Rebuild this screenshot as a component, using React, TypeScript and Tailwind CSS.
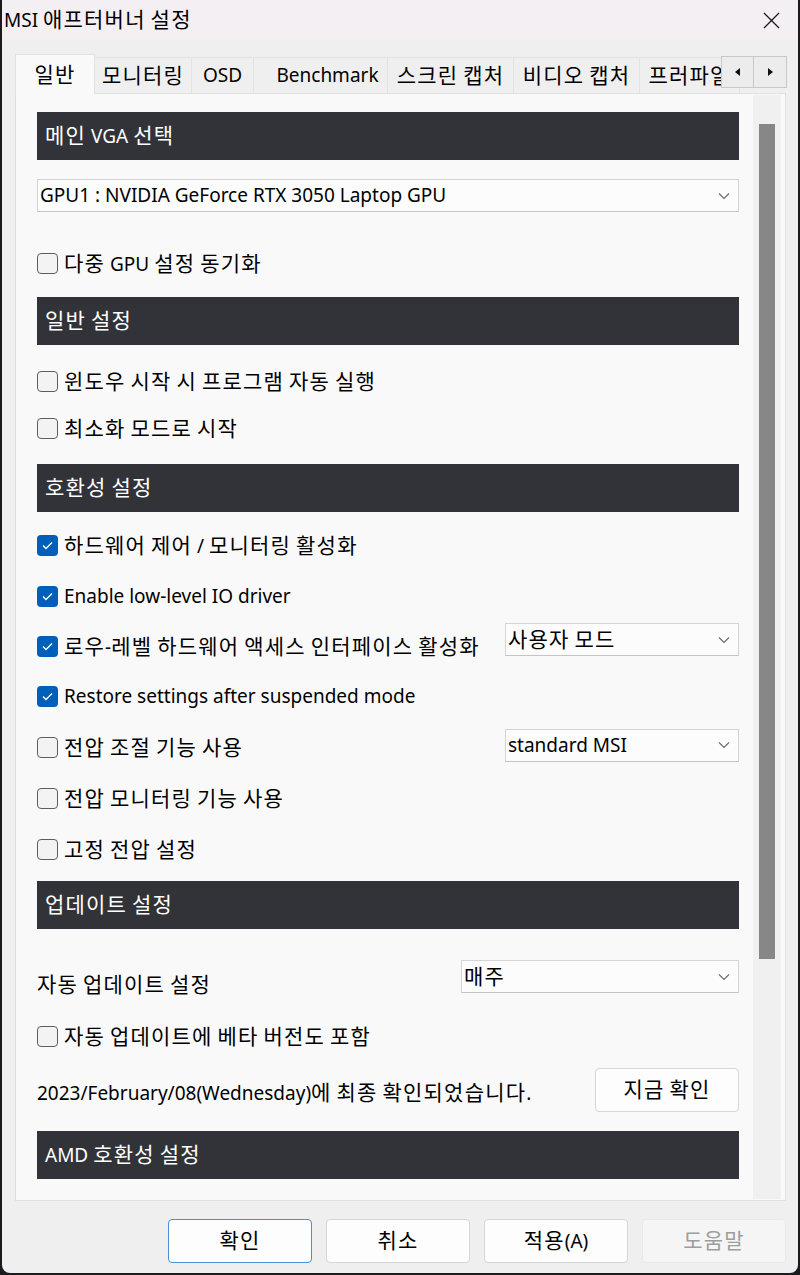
import React from "react";

const font = { fontFamily: '"Noto Sans", "Noto Sans CJK KR", sans-serif' };

// hangul runs get a slightly larger, looser face so they match the original's Malgun widths
const K = ({ t }: { t: string }) => (
  <span>
    {t.split(/([\uAC00-\uD7A3]+)/).map((s, i) =>
      /[\uAC00-\uD7A3]/.test(s) ? (
        <span key={i} className="text-[21px] tracking-[1.2px]">
          {s}
        </span>
      ) : (
        s
      )
    )}
  </span>
);

const tabs = [
  { label: "일반", w: "w-[80px]" },
  { label: "모니터링", w: "w-[97px]" },
  { label: "OSD", w: "w-[62px]" },
  { label: "Benchmark", w: "w-[134px] pl-[14px]" },
  { label: "스크린 캡처", w: "w-[126px]" },
  { label: "비디오 캡처", w: "w-[126px]" },
  { label: "프러파일", w: "w-[100px]" },
];

const Chevron = () => (
  <svg width="12" height="8" viewBox="0 0 12 8" className="shrink-0">
    <polyline points="1,1.5 6,6.5 11,1.5" fill="none" stroke="#6b6b6b" strokeWidth="1.2" />
  </svg>
);

const Select = ({ value, className }: { value: string; className: string }) => (
  <div
    className={`flex h-[33px] items-center justify-between border border-[#d4d4d4] border-b-[#c4c4c4] bg-[#fcfcfc] pl-[2px] pr-[8px] text-[19px] text-black ${className}`}
  >
    <span className="leading-none">
      <K t={value} />
    </span>
    <Chevron />
  </div>
);

const Check = ({ checked, label }: { checked?: boolean; label: string }) => (
  <div className="flex items-center gap-[6px]">
    {checked ? (
      <div className="flex h-[21px] w-[21px] items-center justify-center rounded-[4px] bg-[#005fb8]">
        <svg width="11" height="9" viewBox="0 0 11 9">
          <polyline points="1,4.5 4,7.5 10,1.5" fill="none" stroke="white" strokeWidth="1.3" />
        </svg>
      </div>
    ) : (
      <div className="h-[21px] w-[21px] rounded-[4px] border border-[#5e5e5e] bg-[#f3f3f3]" />
    )}
    <span className="text-[19px] leading-none text-black">
      <K t={label} />
    </span>
  </div>
);

const Header = ({ title, className = "" }: { title: string; className?: string }) => (
  <div className={`flex h-[48px] shrink-0 items-center bg-[#323338] pl-[8px] text-[19px] text-white ${className}`}>
    <K t={title} />
  </div>
);

const Button = ({ label, primary, disabled }: { label: string; primary?: boolean; disabled?: boolean }) => (
  <div
    className={`flex h-[44px] w-[144px] items-center justify-center rounded-[4px] border text-[19px] ${
      primary
        ? "border-[#4d8fd6] bg-[#fdfdfd] text-black"
        : disabled
        ? "border-[#e9e9e9] bg-[#f5f5f5] text-[#9d9d9d]"
        : "border-[#d6d6d6] bg-[#fdfdfd] text-black"
    }`}
  >
    <K t={label} />
  </div>
);

export default function App() {
  return (
    <div className="h-[1275px] w-[800px] bg-[#1b1b1d] px-[2px] pb-[2px]" style={font}>
      <div className="flex h-full flex-col overflow-hidden rounded-b-[8px] bg-[#efefef]">
        {/* title bar */}
        <div className="flex h-[40px] shrink-0 items-center justify-between bg-[#f3eff3] pl-[2px] pr-[18px]">
          <span className="text-[19px] text-black">
            <K t="MSI 애프터버너 설정" />
          </span>
          <svg width="17" height="17" viewBox="0 0 17 17">
            <path d="M1 1 L16 16 M16 1 L1 16" stroke="#1a1a1a" strokeWidth="1.3" />
          </svg>
        </div>

        {/* tabs */}
        <div className="ml-[13px] mt-[13px] flex h-[40px] w-[770px] items-end">
          {tabs.map((t, i) =>
            i === 0 ? (
              <div
                key={t.label}
                className={`relative z-10 -mb-px flex h-[40px] ${t.w} shrink-0 items-center justify-center border border-b-0 border-[#e2e2e2] bg-[#f9f9f9] text-[19px] text-black`}
              >
                <K t={t.label} />
              </div>
            ) : (
              <div
                key={t.label}
                className={`flex h-[36px] ${t.w} shrink-0 items-center justify-center overflow-hidden whitespace-nowrap border-r border-t border-[#e3e3e3] text-[19px] text-black`}
              >
                <K t={t.label} />
              </div>
            )
          )}
          <div className="flex flex-1" />
        </div>

        {/* panel */}
        <div className="relative ml-[13px] flex h-[1108px] w-[771px] border border-[#e0e0e0] bg-[#f9f9f9]">
          {/* tab scroll arrows */}
          <div className="absolute right-[-2px] top-[-38px] flex h-[32px] border border-[#c8c8c8] bg-[#ececec]">
            <div className="flex w-[32px] items-center justify-center border-r border-[#c8c8c8]">
              <svg width="5" height="8" viewBox="0 0 5 8"><polygon points="5,0 0,4 5,8" fill="#111" /></svg>
            </div>
            <div className="flex w-[32px] items-center justify-center">
              <svg width="5" height="8" viewBox="0 0 5 8"><polygon points="0,0 5,4 0,8" fill="#111" /></svg>
            </div>
          </div>

          <div className="flex flex-1 flex-col overflow-hidden pl-[21px] pr-[14px] pt-[18px]">
            <Header title="메인 VGA 선택" />
            <Select value="GPU1 : NVIDIA GeForce RTX 3050 Laptop GPU" className="mt-[19px]" />
            <div className="mt-[28px] flex h-[47px] items-center">
              <Check label="다중 GPU 설정 동기화" />
            </div>

            <Header title="일반 설정" className="mt-[10px]" />
            <div className="mt-[13px] flex h-[47px] items-center">
              <Check label="윈도우 시작 시 프로그램 자동 실행" />
            </div>
            <div className="flex h-[47px] items-center">
              <Check label="최소화 모드로 시작" />
            </div>

            <Header title="호환성 설정" className="mt-[12px]" />
            <div className="mt-[8px] flex h-[51px] items-center">
              <Check checked label="하드웨어 제어 / 모니터링 활성화" />
            </div>
            <div className="flex h-[51px] items-center">
              <Check checked label="Enable low-level IO driver" />
            </div>
            <div className="flex h-[49px] items-center justify-between">
              <Check checked label="로우-레벨 하드웨어 액세스 인터페이스 활성화" />
              <Select value="사용자 모드" className="mb-[14px] w-[234px]" />
            </div>
            <div className="flex h-[51px] items-center">
              <Check checked label="Restore settings after suspended mode" />
            </div>
            <div className="flex h-[51px] items-center justify-between">
              <Check label="전압 조절 기능 사용" />
              <Select value="standard MSI" className="mb-[5px] w-[234px]" />
            </div>
            <div className="flex h-[51px] items-center">
              <Check label="전압 모니터링 기능 사용" />
            </div>
            <div className="flex h-[51px] items-center">
              <Check label="고정 전압 설정" />
            </div>

            <Header title="업데이트 설정" className="mt-[6px]" />
            <div className="mt-[29px] flex h-[50px] items-start justify-between">
              <span className="mt-[16px] text-[19px] leading-none text-black">
                <K t="자동 업데이트 설정" />
              </span>
              <Select value="매주" className="mt-[2px] w-[278px]" />
            </div>
            <div className="mt-[4px] flex h-[48px] items-center">
              <Check label="자동 업데이트에 베타 버전도 포함" />
            </div>
            <div className="mt-[8px] flex h-[44px] items-center justify-between">
              <span className="mt-[4px] text-[19px] leading-none text-black">
                <K t="2023/February/08(Wednesday)에 최종 확인되었습니다." />
              </span>
              <div className="flex h-[44px] w-[144px] items-center justify-center rounded-[4px] border border-[#d6d6d6] bg-[#fdfdfd] text-[19px] text-black">
                <K t="지금 확인" />
              </div>
            </div>

            <Header title="AMD 호환성 설정" className="mt-[19px]" />
          </div>

          {/* scrollbar */}
          <div className="my-[1px] mr-[4px] flex w-[28px] shrink-0 justify-center bg-[#f0f0f0] pt-[29px]">
            <div className="h-[835px] w-[16px] bg-[#878787]" />
          </div>
        </div>

        {/* bottom buttons */}
        <div className="mt-[18px] flex justify-end gap-[14px] pr-[12px]">
          <Button label="확인" primary />
          <Button label="취소" />
          <Button label="적용(A)" />
          <Button label="도움말" disabled />
        </div>
      </div>
    </div>
  );
}
